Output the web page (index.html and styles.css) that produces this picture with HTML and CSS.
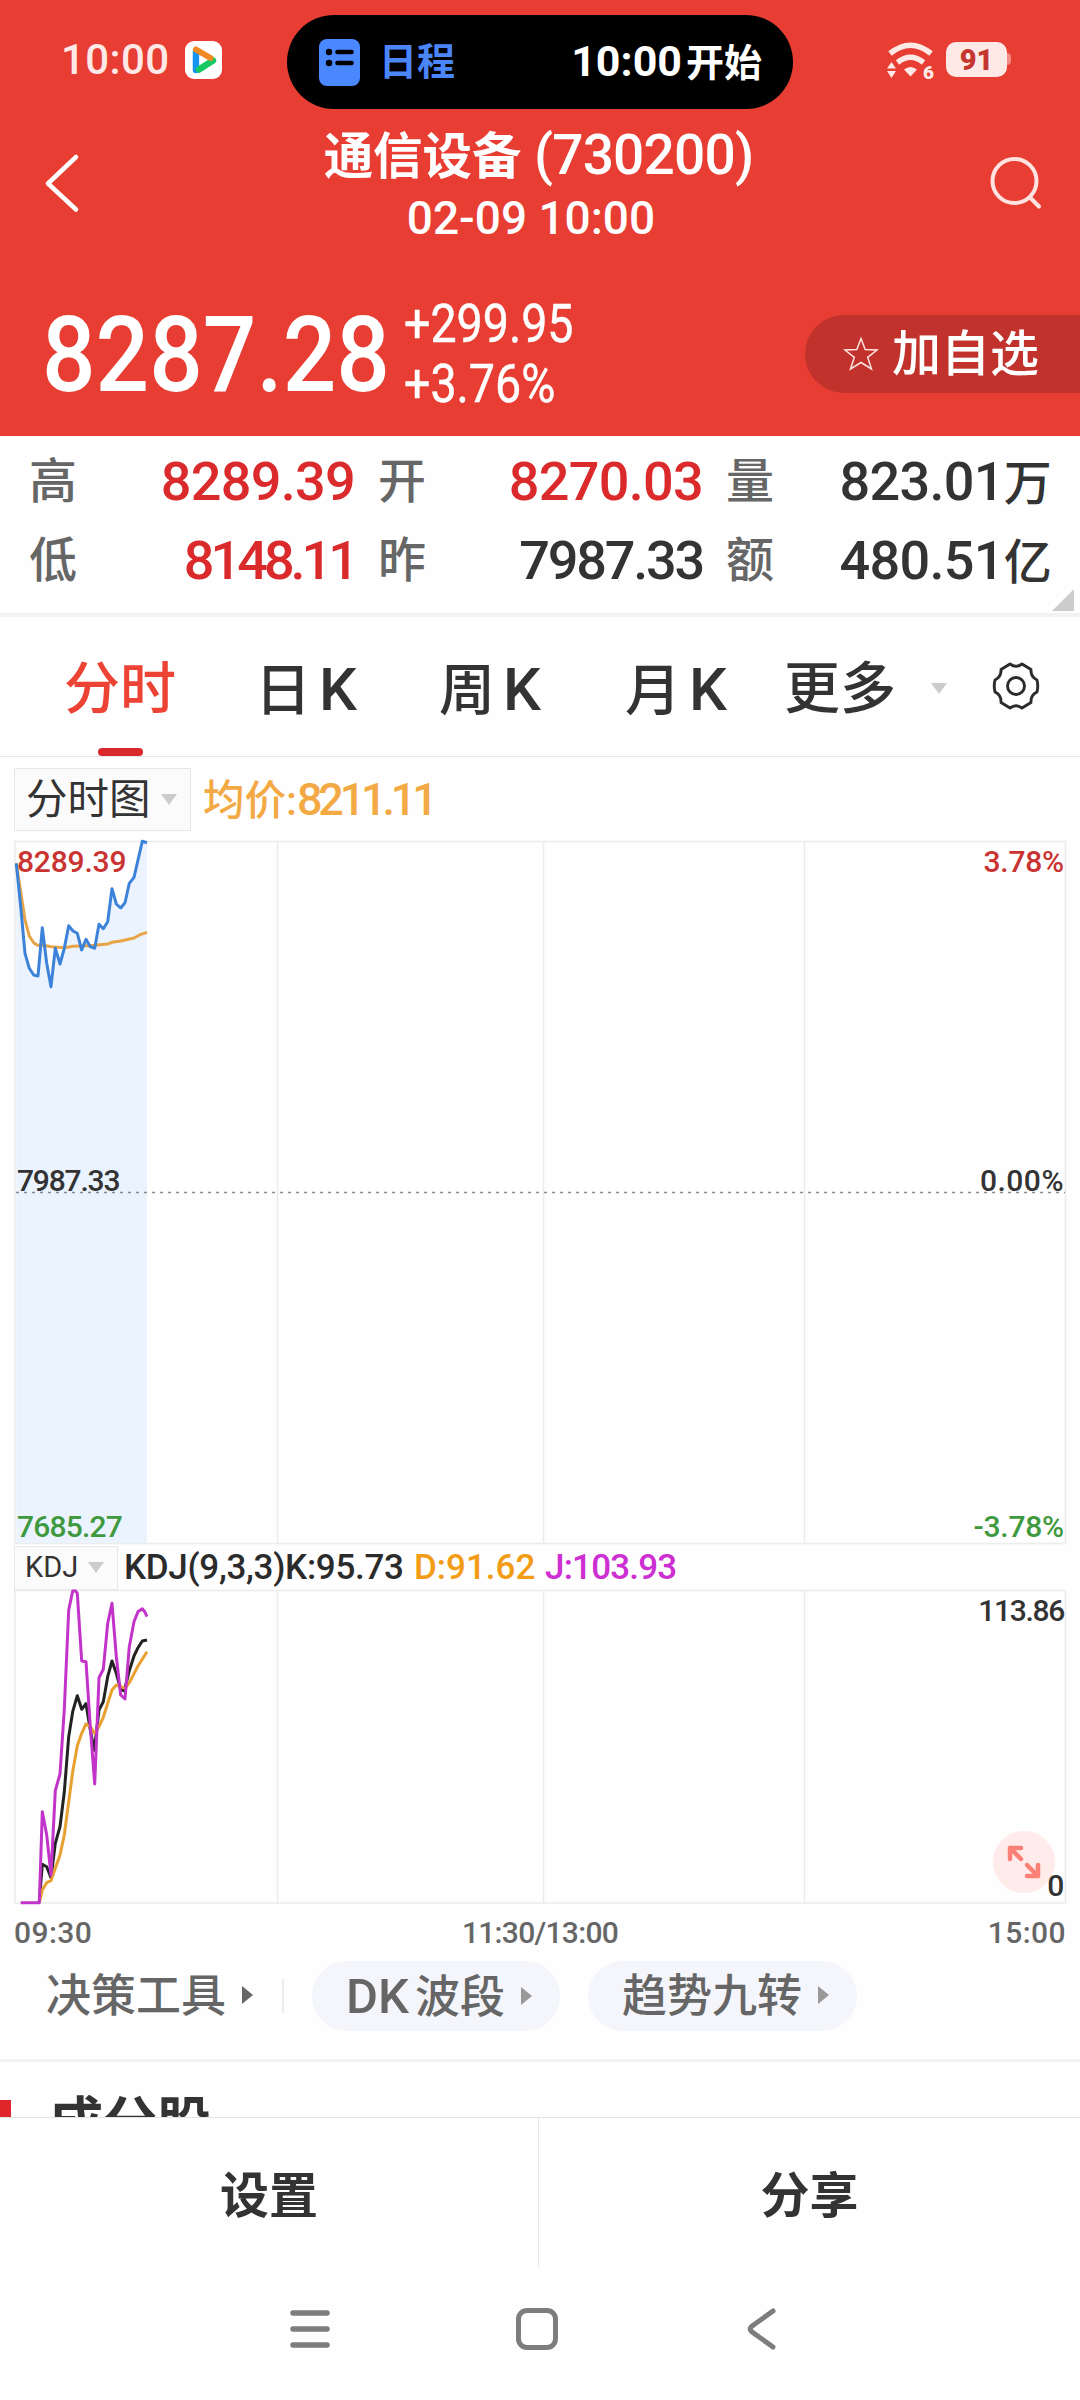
FILE: index.html
```html
<!DOCTYPE html>
<html lang="zh-CN">
<head>
    <meta charset="UTF-8">
    <meta name="viewport" content="width=device-width, initial-scale=1.0">
    <title>通信设备 (730200)</title>
    <link rel="stylesheet" href="styles.css">
</head>
<body>
    <header class="header">
        <div class="status">
            <span class="clock">10:00</span>
            <svg class="app-icon" width="37" height="38" viewBox="0 0 37 38">
                <rect width="37" height="38" rx="9" fill="#fff"/>
                <path d="M11 11v18" stroke="#1594f0" stroke-width="6.5" stroke-linecap="round"/>
                <path d="M14 28.500 28 19.500" stroke="#17c964" stroke-width="6.500" stroke-linecap="round"/>
                <path d="M11 8.500 25.500 17" stroke="#f08a24" stroke-width="6" stroke-linecap="round"/>
                <path d="M14.500 14.500v9l7-4.500z" fill="#fff"/>
            </svg>
            <div class="island">
                <svg width="41" height="47" viewBox="0 0 41 47">
                    <rect width="41" height="47" rx="8" fill="#4a88ff"/>
                    <circle cx="10" cy="13" r="3.200"/><circle cx="10" cy="24" r="3.200"/>
                    <path d="M18.500 13h14M18.500 24h14" stroke="#000" stroke-width="4.600" stroke-linecap="round"/>
                </svg>
                <span class="island-name">日程</span>
                <span class="island-time">10:00<span class="cn">开始</span></span>
            </div>
            <svg class="wifi" width="47" height="37" viewBox="0 0 47 37">
                <g fill="none" stroke="#ffe9e7" stroke-width="5.500">
                    <path d="M3 11.500Q23.500-5 44 11.500"/>
                    <path d="M10.500 20.500Q23.500 10 36.500 20.500"/>
                </g>
                <path d="M17 27.500q6.500-5 13 0L23.500 34.500zM4.500 20l4.500 6.500H0zM4.500 36l4.500-7H0z" fill="#ffe9e7"/>
                <text x="36" y="36.500" class="wifi-gen">6</text>
            </svg>
            <span class="battery">91</span>
        </div>
        <div class="titlebar">
            <svg class="back" width="36" height="60" viewBox="0 0 36 60">
                <path d="M32 4 4 30.500 32 56.500" fill="none" stroke="#fff" stroke-width="4.500" stroke-linecap="round" stroke-linejoin="round"/>
            </svg>
            <div class="title">
                <h1>通信设备 <span class="code">(730200)</span></h1>
                <p>02-09 10:00</p>
            </div>
            <svg class="search" width="54" height="54" viewBox="0 0 54 54">
                <g fill="none" stroke="#ffe3e0" stroke-width="4" stroke-linecap="round">
                    <circle cx="25.500" cy="26" r="22"/>
                    <path d="M41 42.500 50 51.500"/>
                </g>
            </svg>
        </div>
        <div class="quote">
            <span class="price">8287.28</span>
            <div class="change">
                <span>+299.95</span>
                <span>+3.76%</span>
            </div>
            <div class="add">
                <svg width="36" height="36" viewBox="0 0 36 36">
                    <path d="M18 2.500 22.200 13.500 34 14 24.700 21.300 28.500 33 18 26.500 7.500 33 11.300 21.300 2 14 13.800 13.500z" fill="none" stroke="#ffe3e0" stroke-width="1.500"/>
                </svg>
                加自选
            </div>
        </div>
    </header>

    <section class="stats">
        <div class="stat"><label>高</label><b class="up">8289.39</b></div>
        <div class="stat"><label>开</label><b class="up">8270.03</b></div>
        <div class="stat"><label>量</label><b>823.01<i>万</i></b></div>
        <div class="stat"><label>低</label><b class="up tight">8148.11</b></div>
        <div class="stat"><label>昨</label><b class="snug">7987.33</b></div>
        <div class="stat"><label>额</label><b>480.51<i>亿</i></b></div>
        <span class="corner"></span>
    </section>

    <nav class="tabs">
        <span class="tab active">分时</span>
        <span class="tab tab-day">日<em>K</em></span>
        <span class="tab tab-week">周<em>K</em></span>
        <span class="tab tab-month">月<em>K</em></span>
        <span class="tab tab-more">更多</span>
        <span class="caret"></span>
        <svg class="gear" width="46" height="48" viewBox="0 0 46 48">
            <g fill="none" stroke="#2b2b2b" stroke-width="2.900" stroke-linejoin="round">
                <path d="M17 2Q23 6.500 29 2L38 7.500Q37.500 15 44 18Q45.500 24 44 30Q37.500 33 38 40.500L29 46Q23 41.500 17 46L8 40.500Q8.500 33 2 30Q.5 24 2 18Q8.500 15 8 7.500Z"/>
                <circle cx="23" cy="24" r="8.500"/>
            </g>
        </svg>
    </nav>

    <div class="legend">
        <span class="select">分时图<span class="caret"></span></span>
        <span class="avg">均价:<span>8211.11</span></span>
    </div>

    <div class="chart main">
        <svg width="1052" height="704" viewBox="14 841 1052 704">
            <path class="grid" d="M14 841.500H1066M14 1543.500H1066M15 841V1544M277.500 841V1544M543.500 841V1544M804.500 841V1544M1065.500 841V1544"/>
            <path fill="#ebf3fe" d="M16.300 863.300 20.700 906.700 25 953.300 29.300 968.300 33.700 975 38 976 42.300 927.700 46.700 963.300 51 986.700 55.300 948.300 60 964 64.300 948.300 68.700 925.700 73 931 77.300 933.300 81.700 950 86 939.300 90.300 946.700 94.700 948.300 99 924.300 103.300 928.700 107.700 921.700 112 888.700 116.300 904 120.700 908 125 902.700 129.300 883.300 134 877.300 138 860 142.300 841.300 147 842.700V1543H16.300z"/>
            <path d="M16 1192.500H1065" stroke="#8a8a8a" stroke-width="1.500" stroke-dasharray="3 5"/>
            <polyline class="line" stroke="#e8a548" points="16.300,863.300 20.700,891.700 25,920 29.300,936 33.700,942.700 37.300,945.300 42.300,945 51,946.700 64.300,947.700 73,946.300 86,945.700 94.700,945.300 107.700,944 112,942.300 120.700,941 134,938 140,934.700 147,932.300"/>
            <polyline class="line" stroke="#3b82d8" points="16.300,863.300 20.700,906.700 25,953.300 29.300,968.300 33.700,975 38,976 42.300,927.700 46.700,963.300 51,986.700 55.300,948.300 60,964 64.300,948.300 68.700,925.700 73,931 77.300,933.300 81.700,950 86,939.300 90.300,946.700 94.700,948.300 99,924.300 103.300,928.700 107.700,921.700 112,888.700 116.300,904 120.700,908 125,902.700 129.300,883.300 134,877.300 138,860 142.300,841.300 147,842.700"/>
        </svg>
        <span class="mark top left red">8289.39</span>
        <span class="mark top right red">3.78%</span>
        <span class="mark mid left">7987.33</span>
        <span class="mark mid right">0.00%</span>
        <span class="mark bottom left green">7685.27</span>
        <span class="mark bottom right green">-3.78%</span>
    </div>

    <div class="kdj-bar">
        <span class="select small">KDJ<span class="caret"></span></span>
        <span class="kdj-k">KDJ(9,3,3)K:95.73</span>
        <span class="kdj-d">D:91.62</span>
        <span class="kdj-j">J:103.93</span>
    </div>

    <div class="chart sub">
        <svg width="1052" height="314" viewBox="14 1590 1052 314">
            <path class="grid" d="M14 1590.500H1066M14 1903H1066M15 1590V1904M277.500 1590V1904M543.500 1590V1904M804.500 1590V1904M1065.500 1590V1904"/>
            <polyline class="line" stroke="#222" points="39.300,1901.700 42.300,1864.300 46.700,1866.700 51,1877.700 55.300,1843.300 60,1826.700 64.300,1792 68.700,1736.700 72.700,1711.700 77.300,1695.700 81.700,1709.300 86,1703.700 90.300,1730 94.300,1750.300 99,1710 103.300,1701.700 107.700,1676.700 112,1661 116.300,1673.300 120.700,1689.300 124.300,1691 129.300,1670.700 134,1656 138,1647.700 142.300,1641 147,1640"/>
            <polyline class="line" stroke="#e8a030" points="39.300,1902.700 42.300,1890 46.700,1882.700 51,1880.700 55.300,1868.300 60,1855 64.300,1835 72.700,1771.700 77.300,1745.700 81.700,1733.300 86,1724 90.300,1726.700 94.700,1733.300 99,1726.700 103.300,1717.300 107.700,1703.300 112,1690 116.300,1685 120.700,1686.700 125,1688.300 129.300,1682.700 138,1666 147,1651.700"/>
            <polyline class="line" stroke="#c234c9" points="20.700,1902.700 39.300,1902.700 42.300,1811.700 46.700,1835 51,1875 55.300,1790.700 60,1774 64.300,1709.300 68.700,1610 72.700,1591 75.700,1591 77.300,1593.300 81.700,1661 86,1661.700 90.300,1726.700 94.700,1784 99,1677.700 103.300,1669.300 107.700,1623.300 112,1603.300 116.300,1656.700 120.700,1695 125,1699 129.300,1646.700 134,1621.700 138,1611.700 142.300,1608.700 144.700,1611.700 147,1616.700"/>
        </svg>
        <span class="mark top right max">113.86</span>
        <svg class="expand" width="62" height="62" viewBox="0 0 62 62">
            <circle cx="31" cy="31" r="31" fill="#ffebe9"/>
            <g fill="none" stroke="#fb8176" stroke-width="4.500" stroke-linecap="round" stroke-linejoin="round">
                <path d="M28 28 17 17M17 28V17H28"/>
                <path d="M34 34 45 45M45 34V45H34"/>
            </g>
        </svg>
        <span class="mark bottom right">0</span>
    </div>

    <div class="axis">
        <span>09:30</span>
        <span class="noon">11:30/13:00</span>
        <span>15:00</span>
    </div>

    <div class="tools">
        <span class="tool-name">决策工具<span class="arrow dark"></span></span>
        <span class="pill"><em>DK</em>波段<span class="arrow"></span></span>
        <span class="pill">趋势九转<span class="arrow"></span></span>
    </div>

    <section class="members">
        <h2>成分股</h2>
    </section>

    <footer class="actions">
        <span>设置</span>
        <span>分享</span>
    </footer>

    <div class="sysnav">
        <svg width="42" height="42" viewBox="0 0 42 42">
            <path d="M4 5h34M4 21h34M4 37h34" stroke="#7d7d7d" stroke-width="5.500" stroke-linecap="round"/>
        </svg>
        <svg width="42" height="42" viewBox="0 0 42 42">
            <rect x="2.500" y="2.500" width="37" height="37" rx="8.500" fill="none" stroke="#7d7d7d" stroke-width="5"/>
        </svg>
        <svg width="42" height="42" viewBox="0 0 42 42">
            <path d="M31 3 9.500 18.500Q7 21 9.500 23.500L31 39" fill="none" stroke="#7d7d7d" stroke-width="5" stroke-linecap="round"/>
        </svg>
    </div>
</body>
</html>
```
FILE: styles.css
```css
* {
    box-sizing: border-box;
}
body {
    margin: 0;
    width: 1080px;
    height: 2400px;
    overflow: hidden;
    display: flex;
    flex-direction: column;
    background: #fefefe;
    color: #333;
    font-family: Roboto, "Noto Sans CJK SC", sans-serif;
    font-weight: 500;
    white-space: nowrap;
}
svg {
    display: block;
    flex: none;
    overflow: visible;
}
h1, h2, p {
    margin: 0;
}
em, i {
    font-style: normal;
}

/* header */
.header {
    height: 436px;
    flex: none;
    background: #e73d33;
    color: #fff;
}
.status {
    height: 122px;
    display: flex;
    align-items: flex-start;
    padding-left: 61px;
}
.clock {
    width: 124px;
    margin-top: 38px;
    font-size: 42px;
    line-height: 44px;
    letter-spacing: 0.4px;
    color: #ffe9e7;
}
.app-icon {
    margin-top: 41px;
}
.island {
    width: 506px;
    height: 94px;
    margin: 15px 0 0 65px;
    padding: 0 31px 0 32px;
    display: flex;
    align-items: center;
    border-radius: 47px;
    background: #000;
    font-weight: 700;
}
.island-name {
    margin: 0 auto 0 19px;
    font-size: 38px;
    line-height: 96px;
    color: #4a86fa;
}
.island-time {
    font-size: 43px;
    line-height: 96px;
}
.island-time .cn {
    margin-left: 4px;
    font-size: 38px;
}
.wifi {
    margin: 42px 0 0 94px;
}
.wifi-gen {
    font-size: 19px;
    font-weight: 900;
    fill: #ffe9e7;
}
.battery {
    position: relative;
    width: 61px;
    height: 35px;
    margin: 42px 0 0 12px;
    border-radius: 10px;
    background: #ffe9e7;
    color: #c4362e;
    font-size: 29px;
    font-weight: 900;
    line-height: 36px;
    text-align: center;
}
.battery::after {
    content: "";
    position: absolute;
    left: 61px;
    top: 11px;
    width: 4px;
    height: 12px;
    border-radius: 0 4px 4px 0;
    background: #f08a83;
}
.titlebar {
    height: 166px;
    display: flex;
    align-items: flex-start;
    padding: 0 37px 0 44px;
}
.back {
    margin-top: 31px;
}
.title {
    flex: 1;
    text-align: center;
}
.title h1 {
    height: 66px;
    padding-left: 8px;
    font-size: 49.5px;
    font-weight: 700;
    line-height: 67px;
}
.title .code {
    font-size: 55px;
    font-weight: 500;
    letter-spacing: -0.8px;
}
.title p {
    padding-right: 7px;
    font-size: 46px;
    line-height: 60px;
}
.search {
    margin-top: 33px;
}
.quote {
    height: 148px;
    display: flex;
    align-items: flex-start;
}
.price {
    width: 360px;
    margin-left: 42px;
    font-size: 106px;
    line-height: 134px;
    transform: scaleX(0.89);
    transform-origin: left;
}
.change {
    display: flex;
    flex-direction: column;
    margin: 6px 0 0 2px;
    font-size: 53.5px;
    font-weight: 400;
    line-height: 60px;
    transform: scaleX(0.87);
    transform-origin: left;
    -webkit-text-stroke: 0.5px #fff;
}
.add {
    width: 275px;
    height: 78px;
    margin: 27px 0 0 auto;
    padding-left: 38px;
    display: flex;
    align-items: center;
    gap: 13px;
    border-radius: 39px 0 0 39px;
    background: #c0322b;
    font-size: 49px;
    line-height: 81px;
}

/* stats */
.stats {
    position: relative;
    height: 181px;
    flex: none;
    display: grid;
    grid-template-columns: 326px 325px 325px;
    grid-template-rows: 79px 79px;
    column-gap: 23px;
    padding: 6px 0 0 29px;
    border-bottom: 4px solid #f2f2f2;
}
.stat {
    display: flex;
    justify-content: space-between;
    line-height: 79px;
}
.stat label {
    font-size: 48px;
    color: #666;
}
.stat b {
    font-size: 54px;
    font-weight: 500;
    letter-spacing: -0.7px;
}
.stat .tight {
    letter-spacing: -4px;
}
.stat .snug {
    letter-spacing: -2.2px;
}
.stat i {
    font-size: 48px;
}
.stat .up {
    color: #da2a2b;
}
.corner {
    position: absolute;
    right: 6px;
    bottom: 2px;
    border-left: 22px solid transparent;
    border-bottom: 22px solid #ccc;
}

/* tabs */
.tabs {
    height: 140px;
    flex: none;
    display: flex;
    align-items: flex-start;
    padding-left: 64px;
    border-bottom: 1px solid #e8e8e8;
    font-size: 56px;
    line-height: 145px;
}
.tab {
    position: relative;
}
.tab em {
    margin-left: 8px;
    font-size: 60px;
}
.active {
    width: 191px;
    color: #ec4334;
}
.active::after {
    content: "";
    position: absolute;
    left: 34px;
    top: 131px;
    width: 45px;
    height: 8px;
    border-radius: 4px;
    background: #d9292b;
}
.tab-day {
    width: 184px;
}
.tab-week {
    width: 186px;
}
.tab-month {
    width: 159px;
}
.tab-more {
    width: 147px;
}
.caret {
    width: 0;
    height: 0;
    border: 8px solid transparent;
    border-top: 11px solid #ccc;
    border-bottom: 0;
}
.tabs .caret {
    margin: 66px 46px 0 0;
}
.gear {
    margin-top: 45px;
}

/* chart legends */
.legend {
    height: 84px;
    flex: none;
    display: flex;
    align-items: flex-start;
    padding: 11px 0 0 14px;
}
.select {
    width: 177px;
    height: 63px;
    padding-left: 11px;
    display: flex;
    align-items: center;
    border: 1px solid #e8e8e8;
    background: #fbfbfb;
    font-size: 41.5px;
    font-weight: 400;
    line-height: 61px;
}
.select .caret {
    margin-left: 10px;
}
.avg {
    margin-left: 12px;
    font-size: 41.5px;
    line-height: 63px;
    color: #f3a944;
}
.avg span {
    font-size: 45px;
    letter-spacing: -4.2px;
}
.kdj-bar {
    height: 45px;
    flex: none;
    display: flex;
    align-items: center;
    padding-left: 14px;
    font-size: 35px;
    line-height: 48px;
}
.small {
    width: 104px;
    height: 44px;
    padding-left: 10px;
    font-size: 29px;
    line-height: 49px;
}
.kdj-k {
    width: 290px;
    margin-left: 6px;
    letter-spacing: -0.3px;
    color: #2b2b2b;
}
.kdj-d {
    width: 131px;
    color: #f39c16;
}
.kdj-j {
    letter-spacing: -0.8px;
    color: #cd2fd2;
}

/* charts */
.chart {
    position: relative;
    flex: none;
    margin-left: 14px;
    width: 1052px;
}
.main {
    height: 704px;
}
.sub {
    height: 314px;
}
.grid {
    fill: none;
    stroke: #ececec;
    stroke-width: 1.5;
}
.line {
    fill: none;
    stroke-width: 3;
    stroke-linejoin: round;
}
.mark {
    position: absolute;
    font-size: 30px;
    line-height: 30px;
    letter-spacing: -0.2px;
}
.left { left: 3px; }
.right { right: 2px; }
.top { top: 6px; }
.mid { top: 325px; }
.mid.left { letter-spacing: -1.2px; }
.mid.right { letter-spacing: 0.5px; }
.bottom { bottom: 3px; }
.bottom.left { letter-spacing: -0.8px; }
.max { letter-spacing: -1.3px; }
.red { color: #c93331; }
.green { color: #3f9a3f; }
.expand {
    position: absolute;
    right: 11px;
    bottom: 11px;
}
.axis {
    height: 57px;
    flex: none;
    display: flex;
    justify-content: space-between;
    padding: 0 14px;
    font-size: 30px;
    line-height: 58px;
    letter-spacing: 0.4px;
    color: #666;
}
.noon {
    letter-spacing: -0.7px;
}

/* tools */
.tools {
    height: 101px;
    flex: none;
    display: flex;
    align-items: flex-start;
    border-bottom: 3px solid #f2f2f2;
    font-size: 45px;
    line-height: 72px;
    color: #666;
}
.tool-name {
    position: relative;
    width: 312px;
    padding-left: 46px;
}
.tool-name::after {
    content: "";
    position: absolute;
    left: 282px;
    top: 18px;
    width: 2px;
    height: 34px;
    background: #ececec;
}
.pill {
    height: 70px;
    margin-right: 28px;
    padding: 0 28px 0 34px;
    border-radius: 35px;
    background: #f5f6fb;
}
.pill em {
    margin-right: 6px;
    font-size: 49px;
}
.arrow {
    display: inline-block;
    margin-left: 16px;
    vertical-align: 8px;
    border: 9px solid transparent;
    border-left: 11px solid #999;
    border-right: 0;
}
.dark {
    border-left-color: #666;
}

/* component stocks */
.members {
    position: relative;
    height: 55px;
    flex: none;
    overflow: hidden;
    padding: 30px 0 0 49px;
}
.members::before {
    content: "";
    position: absolute;
    left: 0;
    top: 38px;
    width: 11px;
    height: 40px;
    background: #e0262a;
}
.members h2 {
    font-size: 54px;
    font-weight: 700;
    line-height: 64px;
}

/* bottom bars */
.actions {
    height: 150px;
    flex: none;
    display: flex;
    border-top: 1px solid #e4e4e4;
    font-size: 49px;
    font-weight: 700;
    line-height: 157px;
    text-align: center;
}
.actions span {
    flex: 1;
}
.actions span:first-child {
    flex: 0 0 539px;
    border-right: 1px solid #e8e8e8;
}
.sysnav {
    flex: 1;
    display: flex;
    align-items: flex-start;
    justify-content: space-between;
    padding: 41px 296px 0 289px;
}
```
